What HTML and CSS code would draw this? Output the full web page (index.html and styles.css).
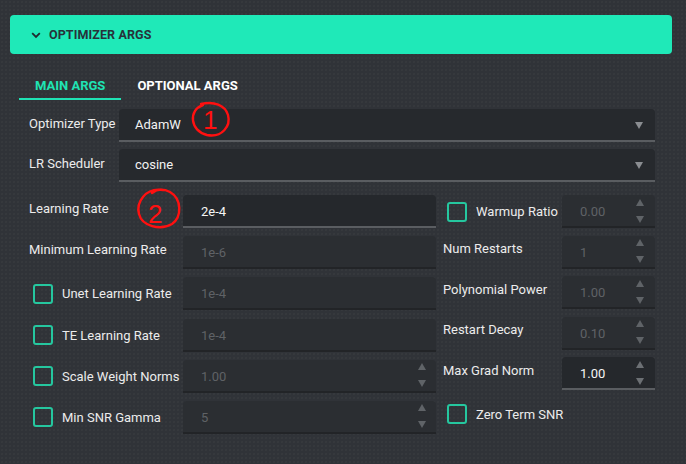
FILE: index.html
```html
<!DOCTYPE html>
<html>
<head>
<meta charset="utf-8">
<link rel="stylesheet" href="styles.css">
</head>
<body>
<div class="page">
  <div class="header">
    <svg class="chev" width="10" height="7" viewBox="0 0 10 7"><path d="M1.2 1.2 L5 5 L8.8 1.2" fill="none" stroke="#1f2a2e" stroke-width="1.8"/></svg>
    <span>OPTIMIZER ARGS</span>
  </div>
  <div class="tabs">
    <div class="tab active">MAIN ARGS</div>
    <div class="tab">OPTIONAL ARGS</div>
  </div>
  <div class="form">
    <div class="srow">
      <div class="slabel">Optimizer Type</div>
      <div class="select"><span>AdamW</span><i class="caret"></i></div>
    </div>
    <div class="srow">
      <div class="slabel">LR Scheduler</div>
      <div class="select"><span>cosine</span><i class="caret"></i></div>
    </div>
    <div class="cols">
      <div class="col left">
        <div class="row">
          <div class="label plain">Learning Rate</div>
          <div class="input active"><span>2e-4</span></div>
        </div>
        <div class="row">
          <div class="label plain">Minimum Learning Rate</div>
          <div class="input"><span>1e-6</span></div>
        </div>
        <div class="row">
          <div class="label"><i class="cb"></i>Unet Learning Rate</div>
          <div class="input"><span>1e-4</span></div>
        </div>
        <div class="row">
          <div class="label"><i class="cb"></i>TE Learning Rate</div>
          <div class="input"><span>1e-4</span></div>
        </div>
        <div class="row">
          <div class="label"><i class="cb"></i>Scale Weight Norms</div>
          <div class="input"><span>1.00</span><div class="spin"><i class="up"></i><i class="down"></i></div></div>
        </div>
        <div class="row">
          <div class="label"><i class="cb"></i>Min SNR Gamma</div>
          <div class="input"><span>5</span><div class="spin"><i class="up"></i><i class="down"></i></div></div>
        </div>
      </div>
      <div class="col right">
        <div class="row">
          <div class="rlabel cbl"><i class="cb"></i>Warmup Ratio</div>
          <div class="num"><span>0.00</span><div class="spin"><i class="up"></i><i class="down"></i></div></div>
        </div>
        <div class="row">
          <div class="rlabel plain">Num Restarts</div>
          <div class="num"><span>1</span><div class="spin"><i class="up"></i><i class="down"></i></div></div>
        </div>
        <div class="row">
          <div class="rlabel plain">Polynomial Power</div>
          <div class="num"><span>1.00</span><div class="spin"><i class="up"></i><i class="down"></i></div></div>
        </div>
        <div class="row">
          <div class="rlabel plain">Restart Decay</div>
          <div class="num"><span>0.10</span><div class="spin"><i class="up"></i><i class="down"></i></div></div>
        </div>
        <div class="row">
          <div class="rlabel plain">Max Grad Norm</div>
          <div class="num active"><span>1.00</span><div class="spin"><i class="up"></i><i class="down"></i></div></div>
        </div>
        <div class="row">
          <div class="rlabel cbl wide"><i class="cb"></i>Zero Term SNR</div>
        </div>
      </div>
    </div>
  </div>
  <svg class="marks" width="686" height="464" viewBox="0 0 686 464">
    <path d="M203 105 C188 110 190 131 207 135 C222 138 231 126 228 115 C225 105 214 101 201 104" fill="none" stroke="#ff1010" stroke-width="2.4" stroke-linecap="round"/>
    <text x="203" y="129" class="mark">1</text>
    <path d="M163 190 C145 187 136 203 139 214 C142 226 160 231 172 224 C182 217 182 199 170 192 C164 189 157 189 152 193" fill="none" stroke="#ff1010" stroke-width="2.4" stroke-linecap="round"/>
    <text x="148" y="223" class="mark">2</text>
  </svg>
</div>
</body>
</html>
```
FILE: styles.css
```css
* { box-sizing: border-box; }
html, body { margin: 0; padding: 0; }
body {
  width: 686px;
  height: 464px;
  overflow: hidden;
  background-color: #303338;
  background-image: radial-gradient(circle, rgba(255,255,255,0.035) 0.6px, transparent 1px);
  background-size: 4px 4px;
  font-family: Roboto, "Liberation Sans", sans-serif;
  color: #ececec;
}
.page {
  position: relative;
  padding: 15px 14px 0 10px;
  height: 464px;
}
.header {
  height: 39px;
  background: #1fe9b8;
  border-radius: 4px;
  display: flex;
  align-items: center;
  padding-left: 21px;
  gap: 8px;
  color: #27323a;
  font-weight: 700;
  font-size: 12.5px;
  letter-spacing: 0.1px;
}
.chev { margin-top: 1px; }
.tabs {
  display: flex;
  margin: 16px 0 0 9px;
  height: 30px;
}
.tab {
  padding: 0 16px;
  display: flex;
  align-items: center;
  font-weight: 700;
  font-size: 13px;
  color: #ffffff;
  border-bottom: 2px solid transparent;
  padding-top: 2px;
}
.tab.active {
  color: #1fe3b4;
  border-bottom-color: #1fe3b4;
}
.form {
  padding-top: 9px;
  padding-left: 19px;
  display: flex;
  flex-direction: column;
}
.srow {
  display: flex;
  height: 33px;
  margin-bottom: 7px;
  align-items: center;
}
.slabel {
  width: 90px;
  font-size: 13px;
  margin-top: -4px;
}
.select {
  width: 536px;
  height: 33px;
  background: #26292d;
  border-bottom: 2px solid #5a5d61;
  border-radius: 4px 4px 0 0;
  display: flex;
  align-items: center;
  justify-content: space-between;
  padding: 0 12px 0 16px;
  font-size: 13px;
  color: #f2f2f2;
}
.caret {
  width: 0; height: 0;
  border-left: 4.5px solid transparent;
  border-right: 4.5px solid transparent;
  border-top: 7px solid #8a8d91;
  margin-top: 1px;
}
.cols {
  display: flex;
  gap: 7px;
  margin-top: 6px;
}
.col { display: flex; flex-direction: column; }
.col.left { width: 407px; gap: 8.2px; }
.col.right { width: 212px; gap: 7.5px; }
.row {
  display: flex;
  align-items: center;
  height: 33px;
}
.label {
  width: 154px;
  font-size: 13px;
  display: flex;
  align-items: center;
  white-space: nowrap;
}
.label.plain { margin-top: -7px; }
.cb {
  display: inline-block;
  width: 20px; height: 20px;
  border: 2px solid #25c79f;
  border-radius: 3px;
  margin-left: 4px;
  margin-right: 9px;
  flex: none;
}
.input {
  width: 253px;
  height: 33px;
  background: #2b2e32;
  border-bottom: 2px solid #222427;
  border-radius: 4px 4px 0 0;
  display: flex;
  align-items: center;
  justify-content: space-between;
  padding: 2px 10px 0 18px;
  font-size: 13px;
  color: #5f6266;
}
.input.active, .num.active {
  background: #25282c;
  border-bottom-color: #5a5d61;
  color: #f5f5f5;
}
.rlabel {
  width: 119px;
  font-size: 13px;
  display: flex;
  align-items: center;
  white-space: nowrap;
}
.rlabel.wide { width: 212px; }
.rlabel.plain { margin-top: -7px; }
.num {
  width: 93px;
  height: 33px;
  background: #2b2e32;
  border-bottom: 2px solid #222427;
  border-radius: 4px 4px 0 0;
  display: flex;
  align-items: center;
  justify-content: space-between;
  padding: 2px 11px 0 18px;
  font-size: 13px;
  color: #5f6266;
}
.spin {
  display: flex;
  flex-direction: column;
  justify-content: space-between;
  height: 24px;
  margin-top: -2px;
}
.spin .up, .spin .down {
  display: block;
  width: 0; height: 0;
  border-left: 4px solid transparent;
  border-right: 4px solid transparent;
}
.spin .up { border-bottom: 7px solid #5f6367; }
.spin .down { border-top: 7px solid #5f6367; }
.num.active .spin .up { border-bottom-color: #6c7074; }
.num.active .spin .down { border-top-color: #6c7074; }
.marks {
  position: absolute;
  left: 0; top: 0;
  pointer-events: none;
}
.mark {
  font-family: "Liberation Sans", sans-serif;
  font-size: 26px;
  font-weight: 400;
  fill: #ff1010;
}
```
